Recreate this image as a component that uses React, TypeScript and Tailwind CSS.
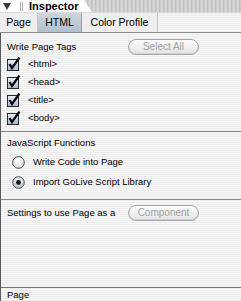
import React from "react";

const stripes =
  "bg-[repeating-linear-gradient(0deg,#ececec_0px,#ececec_1px,#f8f8f8_1px,#f8f8f8_2px)]";

const CheckBox: React.FC = () => (
  <svg width="14" height="14" viewBox="0 0 14 14" className="flex-none">
    <defs>
      <linearGradient id="cb" x1="0" y1="0" x2="0" y2="1">
        <stop offset="0" stopColor="#eef1f7" />
        <stop offset="1" stopColor="#a4b4d2" />
      </linearGradient>
    </defs>
    <rect x="0.5" y="2.5" width="11" height="11" fill="url(#cb)" stroke="#2a2a2a" />
    <path d="M2.5 7 L5 11 L12.5 0.5" fill="none" stroke="#000" strokeWidth="2.2" />
  </svg>
);

const Radio: React.FC<{ on?: boolean }> = ({ on }) => (
  <svg width="13" height="13" viewBox="0 0 13 13" className="flex-none">
    <defs>
      <radialGradient id={on ? "rOn" : "rOff"} cx="0.5" cy="0.35" r="0.7">
        <stop offset="0" stopColor="#ffffff" />
        <stop offset="1" stopColor={on ? "#a4b2c8" : "#d4d4d4"} />
      </radialGradient>
    </defs>
    <circle cx="6.5" cy="6.5" r="5.8" fill={`url(#${on ? "rOn" : "rOff"})`} stroke="#505050" />
    {on && <circle cx="6.5" cy="6.5" r="2.4" fill="#111" />}
  </svg>
);

const PillButton: React.FC<{ label: string }> = ({ label }) => (
  <div className="w-[71px] h-[16px] rounded-full border border-[#a6a6a6] bg-gradient-to-b from-[#fcfcfc] to-[#e4e4e4] flex items-center justify-center text-[#a0a0a0] text-[10px] shadow-[inset_0_-1px_0_#d2d2d2]">
    {label}
  </div>
);

export default function App() {
  const tags = ["<html>", "<head>", "<title>", "<body>"];
  return (
    <div
      className="w-[241px] h-[301px] flex flex-col text-[9.5px] leading-none text-black overflow-hidden bg-white"
      style={{ fontFamily: '"Liberation Sans", Arial, sans-serif' }}
    >
      {/* title bar */}
      <div className="h-[12px] flex bg-[repeating-linear-gradient(90deg,#c4c4c4_0px,#dedede_2px,#b8b8b8_4px)]">
        <div className="w-[92px] bg-white flex items-center pl-[3px] [clip-path:polygon(0_0,84px_0,92px_100%,0_100%)]">
          <svg width="8" height="7" viewBox="0 0 8 7" className="flex-none mr-[5px]">
            <path d="M0 0 H8 L4 7 Z" fill="#3a3a3a" />
          </svg>
          <span className="w-[3px] h-[9px] border-l border-r border-[#aaa] ml-[4px] mr-[6px]" />
          <span className="font-bold text-[11px]">Inspector</span>
        </div>
      </div>
      {/* tabs */}
      <div className="h-[21px] flex border-b border-[#8a8a8a] bg-[#eeeeee] border-t border-t-[#d8d8d8]">
        <div className="w-[38px] flex items-center justify-center border-r border-[#c4c4c4] text-[10.5px]">
          Page
        </div>
        <div className="w-[44px] flex items-center justify-center border-r border-[#9aa3ae] bg-gradient-to-b from-[#cdd5df] to-[#b4bfcd] text-[10.5px]">
          HTML
        </div>
        <div className="w-[76px] flex items-center justify-center border-r border-[#c4c4c4] text-[10.5px]">
          Color Profile
        </div>
        <div className={`flex-1 ${stripes}`} />
      </div>
      {/* body */}
      <div className={`flex-1 flex flex-col border-l border-[#5a5a5a] ${stripes}`}>
        <div className="flex flex-col pl-[6px] pt-[6px] pb-[4px] border-b border-[#8a8a8a]">
          <div className="flex items-center h-[16px]">
            <span className="w-[121px]">Write Page Tags</span>
            <PillButton label="Select All" />
          </div>
          {tags.map((t) => (
            <div key={t} className="flex items-center gap-[7px] h-[18px]">
              <CheckBox />
              <span>{t}</span>
            </div>
          ))}
        </div>
        <div className="flex flex-col pl-[6px] pt-[4px] pb-[7px] border-b border-[#8a8a8a]">
          <div className="h-[14px] flex items-center">JavaScript Functions</div>
          <div className="h-[2px]" />
          <div className="flex items-center gap-[8px] h-[20px] pl-[5px]">
            <Radio />
            <span>Write Code into Page</span>
          </div>
          <div className="flex items-center gap-[8px] h-[20px] pl-[5px]">
            <Radio on />
            <span>Import GoLive Script Library</span>
          </div>
        </div>
        <div className="flex items-center pl-[6px] pt-[5px]">
          <span className="w-[121px] h-[16px] flex items-center">Settings to use Page as a</span>
          <PillButton label="Component" />
        </div>
        <div className="flex-1" />
        <div className="h-[14px] border-t border-[#777] pl-[6px] flex items-center">Page</div>
      </div>
    </div>
  );
}
